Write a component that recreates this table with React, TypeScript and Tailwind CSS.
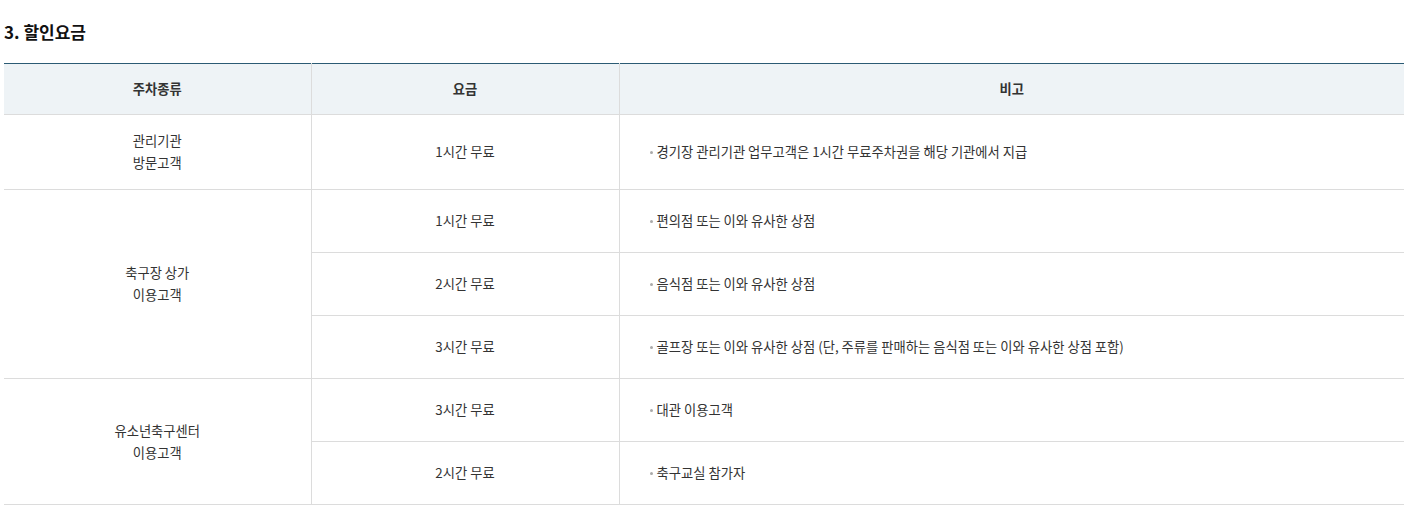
const font = { fontFamily: '"Noto Sans CJK KR", "Noto Sans", sans-serif' }

type Row = { fee: string; note: string }
type Group = { label: string[]; rows: Row[]; first?: boolean }

const groups: Group[] = [
  {
    label: ["관리기관", "방문고객"],
    rows: [{ fee: "1시간 무료", note: "경기장 관리기관 업무고객은 1시간 무료주차권을 해당 기관에서 지급" }],
    first: true,
  },
  {
    label: ["축구장 상가", "이용고객"],
    rows: [
      { fee: "1시간 무료", note: "편의점 또는 이와 유사한 상점" },
      { fee: "2시간 무료", note: "음식점 또는 이와 유사한 상점" },
      { fee: "3시간 무료", note: "골프장 또는 이와 유사한 상점 (단, 주류를 판매하는 음식점 또는 이와 유사한 상점 포함)" },
    ],
  },
  {
    label: ["유소년축구센터", "이용고객"],
    rows: [
      { fee: "3시간 무료", note: "대관 이용고객" },
      { fee: "2시간 무료", note: "축구교실 참가자" },
    ],
  },
]

export default function App() {
  return (
    <div className="min-h-[508px] bg-white px-[4px] pt-[19px] text-[#333]" style={font}>
      <h3 className="text-[17px] font-bold leading-[25px] text-[#111]">3. 할인요금</h3>
      <table className="mt-[19px] w-[1400px] table-fixed border-collapse border-t border-t-[#2b5b74] text-[13.3px]">
        <colgroup>
          <col className="w-[307px]" />
          <col className="w-[308px]" />
          <col />
        </colgroup>
        <thead>
          <tr className="h-[51px] bg-[#eef3f6]">
            <th className="border-b border-b-[#dcdcdc] border-r border-r-[#dcdcdc] font-bold text-[#333]">주차종류</th>
            <th className="border-b border-b-[#dcdcdc] border-r border-r-[#dcdcdc] font-bold text-[#333]">요금</th>
            <th className="border-b border-b-[#dcdcdc] font-bold text-[#333]">비고</th>
          </tr>
        </thead>
        <tbody>
          {groups.map((g) =>
            g.rows.map((r, i) => (
              <tr key={g.label[0] + i} className={g.first ? "h-[75px]" : "h-[63px]"}>
                {i === 0 && (
                  <td
                    rowSpan={g.rows.length}
                    className="border-b border-b-[#dcdcdc] border-r border-r-[#dcdcdc] text-center leading-[22px]"
                  >
                    {g.label.map((l) => (
                      <div key={l}>{l}</div>
                    ))}
                  </td>
                )}
                <td className="border-b border-b-[#dcdcdc] border-r border-r-[#dcdcdc] text-center">{r.fee}</td>
                <td className="border-b border-b-[#dcdcdc] pl-[30px]">
                  <span className="flex items-center gap-[4px]">
                    <span className="h-[3px] w-[3px] rounded-full bg-[#aaa]" />
                    {r.note}
                  </span>
                </td>
              </tr>
            ))
          )}
        </tbody>
      </table>
    </div>
  )
}
